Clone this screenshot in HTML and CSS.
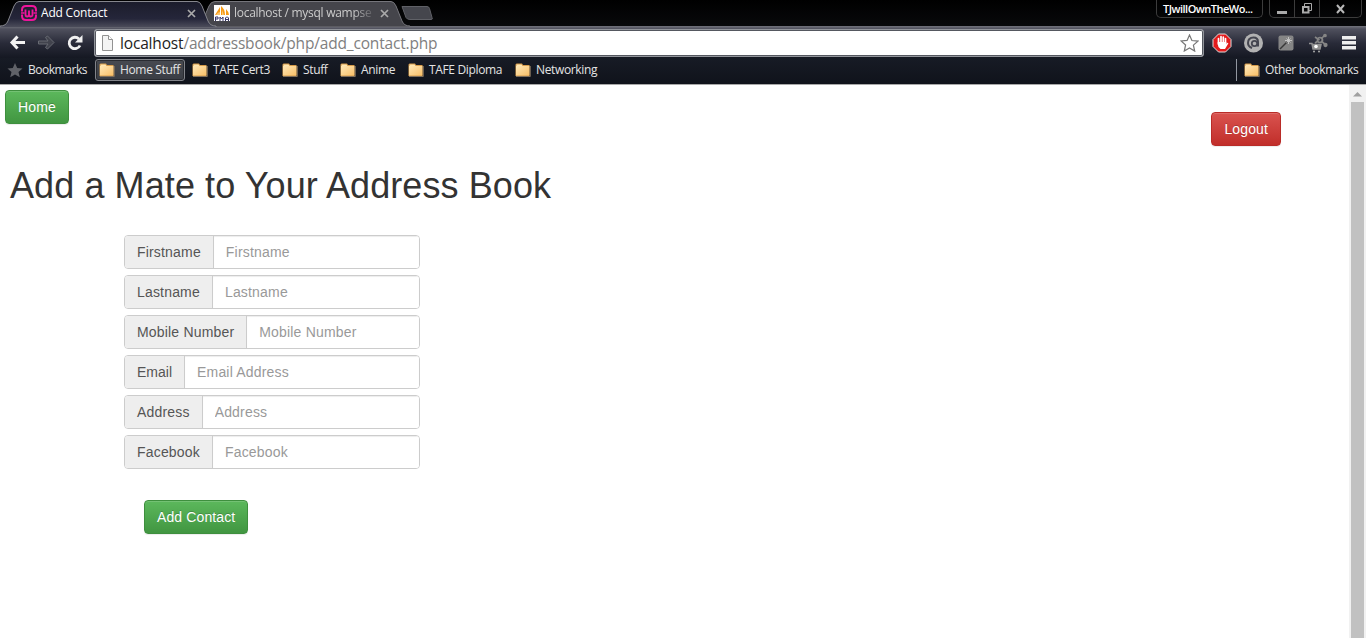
FILE: index.html
```html
<!DOCTYPE html>
<html lang="en">
<head>
<meta charset="utf-8">
<title>Add Contact</title>
<link rel="stylesheet" href="styles.css">
</head>
<body>
<svg class="defs" width="0" height="0">
  <defs>
    <linearGradient id="folderFill" x1="0" y1="0" x2="1" y2="1"><stop offset="0" stop-color="#ffe7b5"/><stop offset="1" stop-color="#f8bf68"/></linearGradient>
    <linearGradient id="activeTab" x1="0" y1="0" x2="0" y2="1"><stop offset="0" stop-color="#1b1c2b"/><stop offset=".65" stop-color="#25263a"/><stop offset="1" stop-color="#50515e"/></linearGradient>
    <symbol id="folder" viewBox="0 0 16 14"><path d="M.5 3V1.500L1.500.5h5.500l1 1.500h6.500v11h-14z" fill="#d69b4a"/><path d="M1 3h13.500v9.500H1z" fill="url(#folderFill)"/><path d="M1.500 1.500h5l1 1.500H1.500z" fill="#ffe6b0"/><path d="M15.300 3v10.500H1" fill="none" stroke="#80705c"/></symbol>
  </defs>
</svg>
<header class="browser">
  <div class="tabstrip">
    <svg class="tab-shapes" width="440" height="27" viewBox="0 0 440 27">
      <path d="M200 27L209 6Q211 1.500 215 1.500H391Q394 1.500 396 6L402 21Q404 26 410 26V27z" fill="#45454b" stroke="#75757b"/>
      <path d="M402 6.500h25q2 0 2.500 2l2.500 9q1 2-1 2h-21q-3 0-4-2z" fill="#45464d" stroke="#606167"/>
      <path d="M0 26Q6 26 8 21L14 6Q16 1.500 19 1.500H197Q200 1.500 202 6L208 21Q210 26 216 26V28H0z" fill="url(#activeTab)" stroke="#85868d"/>
    </svg>
    <div class="tab tab-first">
      <svg width="16" height="16" viewBox="0 0 16 16" fill="none" stroke="#f0149c"><path d="M1 6.500V5q0-4 4-4h6q4 0 4 4v1.500M15 9.500V11q0 4-4 4H5q-4 0-4-4V9.500" stroke-width="2"/><path d="M0 8h3.500M12.500 8H16" stroke-width="1.500"/><path d="M4.500 4.500v5q0 2 1.700 2T8 9.500V5.500v4q0 2 1.800 2t1.700-2v-5" stroke-width="1.800"/></svg>
      <span class="tab-title">Add Contact</span>
      <svg class="close" width="9" height="9" viewBox="0 0 9 9"><path d="M1 1l7 7M8 1L1 8"/></svg>
    </div>
    <div class="tab tab-second">
      <svg width="16" height="16" viewBox="0 0 16 16"><path fill="#fff" d="M0 0h16v16H0z"/><path fill="#f79a14" d="M1 10L6 2v8zM7 10V1q4 3 4 9zM12 10V4q3 3 3 6z"/><path fill="#fcc773" d="M2 10q2-3 4-3v3zM8 10V5l2 5z"/><path d="M1.500 16v-4h2.500v2h-2.500M6 16v-4l1.500 2L9 12v4M11.500 16v-3l1-1h1l1 1v3m-3-1.500h3" fill="none" stroke="#343368"/></svg>
      <span class="tab-title">localhost / mysql wampse</span>
      <svg class="close" width="9" height="9" viewBox="0 0 9 9"><path d="M1 1l7 7M8 1L1 8"/></svg>
    </div>
    <div class="profile">TJwillOwnTheWo...</div>
    <div class="window-buttons">
      <span><svg width="12" height="12" viewBox="0 0 12 12"><path d="M1 8h10v3H1z" fill="#aaa"/></svg></span>
      <span><svg width="12" height="12" viewBox="0 0 12 12" fill="none" stroke="#aaa"><path d="M3.500 3V.5h7v7H8"/><path d="M2 4h5.500v5.500H2z" stroke-width="2"/></svg></span>
      <span><svg width="10" height="10" viewBox="0 0 10 10"><path d="M1 1l7 8M8 1L1 9" stroke="#b8b8b8" stroke-width="2"/></svg></span>
    </div>
  </div>
  <div class="toolbar">
    <svg class="back" width="17" height="15" viewBox="0 0 17 15"><path d="M8.500 1.500L3 7.500l5.500 6M3 7.500H16" fill="none" stroke="#f2f2f2" stroke-width="3"/></svg>
    <svg class="forward" width="17" height="15" viewBox="0 0 17 15"><path d="M.5 6H10L7.500 2.500 9.500 1l6.500 6.500L9.500 14l-2-1.500L10 9H.5z" fill="#41434d" stroke="#686b73"/></svg>
    <svg class="reload" width="16" height="16" viewBox="0 0 16 16"><path d="M13 10.500A5.700 5.700 0 1 1 12 4" fill="none" stroke="#f0f0f0" stroke-width="2.800"/><path d="M15.500 0v7.500H8z" fill="#f0f0f0"/></svg>
    <div class="address">
      <svg width="13" height="16" viewBox="0 0 13 16"><path d="M1.500.5h6l4 4v11h-10z" fill="#f4f4f4" stroke="#929292"/><path d="M7.500.5v4h4" fill="#fff" stroke="#929292"/></svg>
      <span class="url"><b>localhost</b>/addressbook/php/add_contact.php</span>
      <svg class="star" width="19" height="18" viewBox="0 0 19 18"><path d="M9.500 1l2.400 5.500 6 .6-4.500 4 1.300 6-5.200-3.100L4.300 17l1.300-6-4.500-4 6-.6z" fill="#fff" stroke="#777" stroke-width="1.200"/></svg>
    </div>
    <div class="extensions">
      <svg width="20" height="20" viewBox="0 0 20 20"><path d="M6.500 1h7L19 6.500v7L13.500 19h-7L1 13.500v-7z" fill="#e41b1c" stroke="#ddd"/><path d="M6.500 11V5.500M9 10V3.500M11.300 10V4M13.500 11V5.500" stroke="#fff" stroke-width="1.700" stroke-linecap="round"/><path d="M5.700 9h8.600v2l1-1q1-.5 1 .5L13 16H8.500Q5.700 14 5.700 11z" fill="#fff"/></svg>
      <svg width="20" height="20" viewBox="0 0 20 20"><circle cx="9.500" cy="10" r="9.500" fill="#b2b2b2"/><path d="M8 15Q4 13.500 4 10Q4 4.500 9.500 4.500Q14 4.500 14 9v4.500" fill="none" stroke="#454650" stroke-width="2"/><circle cx="10.500" cy="10.500" r="2.700" fill="none" stroke="#454650" stroke-width="1.800"/></svg>
      <svg class="wand" width="16" height="16" viewBox="0 0 16 16"><rect width="15" height="15" x=".5" y=".5" rx="2" fill="#858585"/><path d="M2 14l7-7" stroke="#383838" stroke-width="1.500"/><path d="M10.500 2v7M7 5.500h7M8.500 3.500l4 4M12.500 3.500l-4 4" stroke="#c8c8c8" stroke-width=".9"/></svg>
      <svg class="network" width="20" height="20" viewBox="0 0 20 20"><g stroke="#858585" stroke-width="1.700" fill="none"><path d="M11.500 7L7 4M13 6l4-4M13 8l5 4M10 8l-3 2"/><circle cx="12" cy="7" r="2.500"/><circle cx="17" cy="2.500" r="1" fill="#858585"/><circle cx="17.500" cy="12" r="1.300" fill="#858585"/></g><path d="M1 10.500h3l1 5.500h7l1-4.500H5" fill="#8f8f8f" stroke="#929292" stroke-width="1.500"/><circle cx="8" cy="13.500" r="1.800" fill="#fff"/><circle cx="6" cy="18.500" r="1" fill="#aaa"/><circle cx="11" cy="18.500" r="1" fill="#aaa"/></svg>
      <svg class="menu" width="14" height="14" viewBox="0 0 14 14"><path d="M0 0h14v3.500H0zM0 5h14v3.500H0zM0 10h14v3.500H0z" fill="#eee"/></svg>
    </div>
  </div>
  <nav class="bookmarks">
    <div class="bookmark w-bookmarks"><svg width="16" height="15" viewBox="0 0 16 15"><path d="M8 0l2.200 5 5.300.4-4 3.500 1.300 5.300L8 11.400l-4.800 2.800 1.300-5.300-4-3.500L5.800 5z" fill="#606268"/></svg><span>Bookmarks</span></div>
    <div class="bookmark selected"><svg width="16" height="14"><use href="#folder"/></svg><span>Home Stuff</span></div>
    <div class="bookmark w-cert"><svg width="16" height="14"><use href="#folder"/></svg><span>TAFE Cert3</span></div>
    <div class="bookmark w-stuff"><svg width="16" height="14"><use href="#folder"/></svg><span>Stuff</span></div>
    <div class="bookmark w-anime"><svg width="16" height="14"><use href="#folder"/></svg><span>Anime</span></div>
    <div class="bookmark w-diploma"><svg width="16" height="14"><use href="#folder"/></svg><span>TAFE Diploma</span></div>
    <div class="bookmark"><svg width="16" height="14"><use href="#folder"/></svg><span>Networking</span></div>
    <div class="bookmark other"><svg width="16" height="14"><use href="#folder"/></svg><span>Other bookmarks</span></div>
  </nav>
</header>
<div class="viewport">
  <main class="page">
    <div class="actions"><button class="btn btn-success">Home</button><button class="btn btn-danger">Logout</button></div>
    <h1>Add a Mate to Your Address Book</h1>
    <form class="contact-form">
      <label class="input-group"><span>Firstname</span><input type="text" placeholder="Firstname"></label>
      <label class="input-group"><span>Lastname</span><input type="text" placeholder="Lastname"></label>
      <label class="input-group"><span>Mobile Number</span><input type="text" placeholder="Mobile Number"></label>
      <label class="input-group email"><span>Email</span><input type="text" placeholder="Email Address"></label>
      <label class="input-group"><span>Address</span><input type="text" placeholder="Address"></label>
      <label class="input-group"><span>Facebook</span><input type="text" placeholder="Facebook"></label>
      <button type="button" class="btn btn-success submit">Add Contact</button>
    </form>
  </main>
  <div class="scrollbar"><svg width="9" height="5" viewBox="0 0 9 5"><path d="M4.500 0L9 4.500H0z" fill="#a0a0a0"/></svg><div class="thumb"></div></div>
</div>
</body>
</html>
```
FILE: styles.css
```css
* { box-sizing: border-box; }
body { margin: 0; height: 638px; overflow: hidden; display: flex; flex-direction: column; background: #fff; font: 14px/20px "Liberation Sans", Arial, sans-serif; color: #333; }
svg { display: block; flex: none; }
.defs { position: absolute; }
.browser { height: 85px; flex: none; background: #10131b; border-bottom: 1px solid #a8a8a8; font-family: "Open Sans", "Noto Sans", sans-serif; font-size: 12px; line-height: 16px; color: #e4e4e4; }
.tabstrip { height: 26px; display: flex; position: relative; background: linear-gradient(#000, #08090b); }
.tab-shapes { position: absolute; left: 0; top: 0; }
.tab { position: relative; height: 26px; display: flex; align-items: center; }
.tab-first { width: 213px; padding: 0 17px 0 21px; gap: 4px; color: #fff; }
.tab-second { width: 190px; padding: 0 14px 0 1px; gap: 4px; color: #ccc; }
.tab-title { flex: 1; white-space: nowrap; overflow: hidden; letter-spacing: -.2px; }
.tab-second .tab-title { letter-spacing: -.28px; -webkit-mask-image: linear-gradient(90deg, #000 84%, transparent); mask-image: linear-gradient(90deg, #000 84%, transparent); }
.close { stroke: #aaa; stroke-width: 1.7; }
.profile { margin-left: auto; width: 107px; height: 18px; border: 1px solid #3c3c3c; border-top: 0; border-radius: 0 0 5px 5px; padding: 1px 6px; color: #fff; font-size: 11px; font-weight: 600; letter-spacing: -.5px; white-space: nowrap; }
.window-buttons { margin: 0 4px 0 6px; width: 93px; height: 18px; border: 1px solid #3c3c3c; border-top: 0; border-radius: 0 0 5px 5px; display: grid; grid-template-columns: 25px 25px 1fr; }
.window-buttons span { display: grid; place-items: center; border-right: 1px solid #3c3c3c; }
.window-buttons span:last-child { border: 0; }
.toolbar { height: 32px; display: flex; align-items: center; padding: 1px 9px 0; background: linear-gradient(#73747d 0, #4f505d 3px, #292b39 17px, #151822 100%); }
.forward { margin-left: 12px; }
.reload { margin-left: 12px; }
.address { margin-left: 11px; width: 1110px; height: 28px; flex: none; display: flex; align-items: center; background: #fff; border: 1px solid #92959b; box-shadow: inset 0 0 0 1px #555860; border-radius: 3px; padding: 0 4px 0 6px; }
.url { margin-left: 6px; font-size: 15.5px; line-height: 22px; color: #808080; white-space: nowrap; letter-spacing: -.17px; }
.url b { color: #222; font-weight: 400; }
.star { margin-left: auto; }
.extensions { margin-left: 8px; display: flex; align-items: center; gap: 12px; }
.wand, .network, .menu { margin-left: 2px; }
.bookmarks { height: 26px; display: flex; align-items: center; padding: 0 8px 2px 7px; background: linear-gradient(#171b25, #10131b); letter-spacing: -.35px; }
.bookmark { display: flex; align-items: center; gap: 5px; white-space: nowrap; }
.w-bookmarks { width: 88px; letter-spacing: -.47px; }
.selected { width: 90px; height: 22px; margin-right: 7px; padding: 0 3px; border: 1px solid #82848a; border-radius: 3px; background: linear-gradient(#474a51, #3a3d44); box-shadow: inset 0 0 0 1px #292b31; }
.w-cert { width: 90px; }
.w-stuff { width: 58px; }
.w-anime { width: 68px; }
.w-diploma { width: 107px; }
.other { margin-left: auto; height: 22px; width: 122px; padding-left: 7px; border-left: 1px solid #9297a0; }
.viewport { flex: 1; display: flex; min-height: 0; }
.page { flex: 1; }
.actions { display: flex; justify-content: space-between; height: 61px; padding: 5px 68px 0 5px; }
.btn { height: 34px; border: 1px solid; border-radius: 4px; padding: 6px 12px; color: #fff; font: 14px/20px "Liberation Sans", Arial, sans-serif; letter-spacing: .12px; text-shadow: 0 -1px 0 rgba(0,0,0,.2); box-shadow: inset 0 1px 0 rgba(255,255,255,.15), 0 1px 1px rgba(0,0,0,.075); }
.btn-success { background: linear-gradient(#5cb85c, #419641); border-color: #3e8f3e; }
.btn-danger { background: linear-gradient(#d9534f, #c12e2a); border-color: #b92c28; margin-top: 22px; }
h1 { margin: 20px 0 0 10px; font-size: 36px; line-height: 40px; font-weight: 500; letter-spacing: .09px; }
.contact-form { margin: 29px 0 0 124px; width: 296px; display: flex; flex-direction: column; align-items: stretch; gap: 6px; letter-spacing: .18px; }
.input-group { display: flex; height: 34px; border: 1px solid #ccc; border-radius: 4px; overflow: hidden; }
.input-group span { flex: none; padding: 6px 12px; background: #eee; border-right: 1px solid #ccc; color: #555; }
.input-group input { flex: 1; min-width: 0; border: 0; outline: 0; padding: 0 12px; font: inherit; letter-spacing: .18px; box-shadow: inset 0 1px 1px rgba(0,0,0,.075); }
.input-group.email span { letter-spacing: 0; }
.input-group input::placeholder { color: #999; opacity: 1; }
.submit { align-self: flex-start; margin: 25px 0 0 20px; }
.scrollbar { width: 17px; background: #f1f1f1; display: flex; flex-direction: column; align-items: center; padding-top: 7px; }
.thumb { width: 13px; flex: 1; margin-top: 5px; background: #c1c1c1; }
```
